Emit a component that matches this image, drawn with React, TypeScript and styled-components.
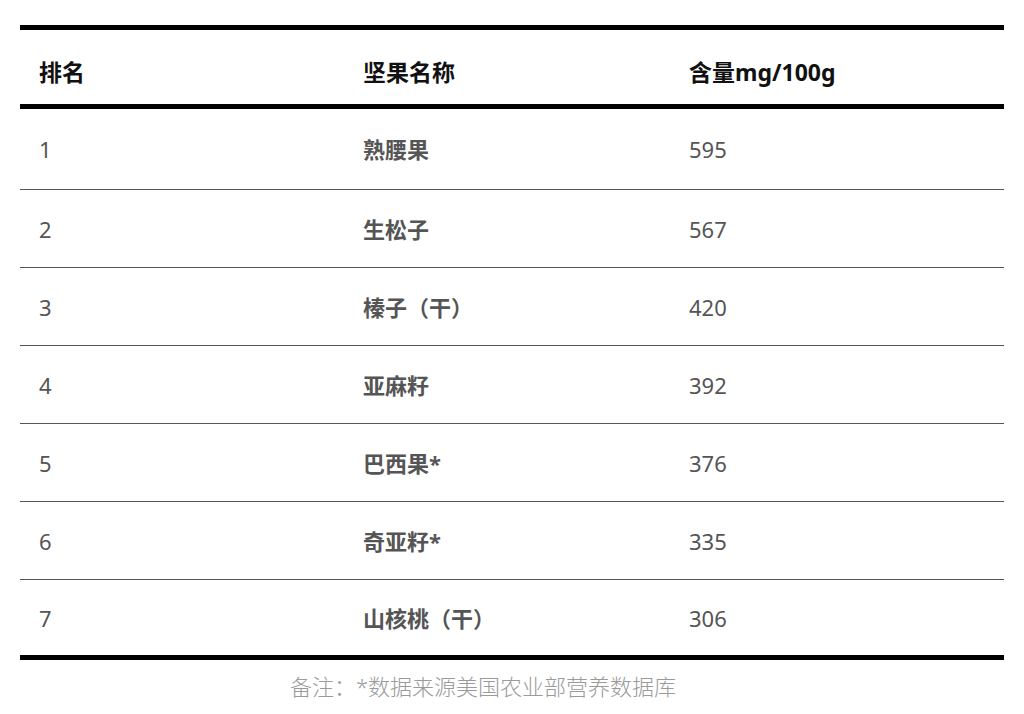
import React from 'react';
import styled, { createGlobalStyle } from 'styled-components';

interface NutRow {
  rank: number;
  name: string;
  amount: number;
}

const rows: NutRow[] = [
  { rank: 1, name: '熟腰果', amount: 595 },
  { rank: 2, name: '生松子', amount: 567 },
  { rank: 3, name: '榛子（干）', amount: 420 },
  { rank: 4, name: '亚麻籽', amount: 392 },
  { rank: 5, name: '巴西果*', amount: 376 },
  { rank: 6, name: '奇亚籽*', amount: 335 },
  { rank: 7, name: '山核桃（干）', amount: 306 },
];

const GlobalStyle = createGlobalStyle`
  body {
    margin: 0;
    background: #fff;
    font-family: "Noto Sans", "Noto Sans CJK SC", sans-serif;
  }
`;

const Page = styled.div`
  padding: 25px 20px 0;
`;

const Table = styled.table`
  width: 984px;
  table-layout: fixed;
  border-collapse: separate;
  border-spacing: 0;
`;

const HeadCell = styled.th`
  height: 64px;
  padding: 10px 0 0 19px;
  box-sizing: content-box;
  text-align: left;
  font-size: 23px;
  line-height: 30px;
  font-weight: 700;
  color: #111;
  border-top: 5px solid #000;
  border-bottom: 5px solid #000;
  vertical-align: middle;
`;

const Row = styled.tr`
  &:first-child td {
    height: 80px;
  }
  &:last-child td {
    height: 75px;
    border-bottom: 5px solid #000;
  }
`;

const Cell = styled.td<{ $bold?: boolean }>`
  height: 77px;
  padding: 0 0 0 19px;
  font-size: 22px;
  line-height: 30px;
  font-weight: ${(p) => (p.$bold ? 700 : 400)};
  color: #555;
  border-bottom: 1px solid #555;
  vertical-align: middle;
`;

const Note = styled.div`
  margin-top: 12px;
  padding-right: 58px;
  text-align: center;
  font-size: 22px;
  line-height: 28px;
  font-weight: 300;
  color: #9a9a9a;
`;

const App: React.FC = () => (
  <>
    <GlobalStyle />
    <Page>
      <Table>
        <colgroup>
          <col style={{ width: 324 }} />
          <col style={{ width: 326 }} />
          <col style={{ width: 334 }} />
        </colgroup>
        <thead>
          <tr>
            <HeadCell>排名</HeadCell>
            <HeadCell>坚果名称</HeadCell>
            <HeadCell>含量mg/100g</HeadCell>
          </tr>
        </thead>
        <tbody>
          {rows.map((r) => (
            <Row key={r.rank}>
              <Cell>{r.rank}</Cell>
              <Cell $bold>{r.name}</Cell>
              <Cell>{r.amount}</Cell>
            </Row>
          ))}
        </tbody>
      </Table>
      <Note>备注：*数据来源美国农业部营养数据库</Note>
    </Page>
  </>
);

export default App;
